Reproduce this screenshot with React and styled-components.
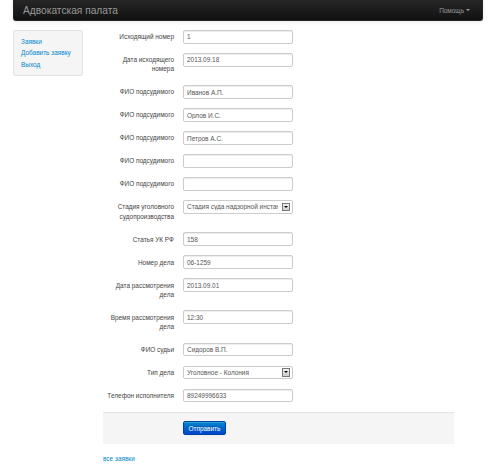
import React from "react";
import styled, { createGlobalStyle } from "styled-components";

const Global = createGlobalStyle`
  html, body { margin: 0; padding: 0; background: #fff; }
  body { font-family: "Liberation Sans", Arial, sans-serif; font-size: 6.44px; color: #333; }
  * { box-sizing: border-box; }
`;

const Page = styled.div`
  width: 500px;
  padding: 0 17px 0 13px;
`;

const Navbar = styled.div`
  height: 21px;
  background: linear-gradient(#262626, #111111);
  border: 1px solid #252525;
  border-top: none;
  border-radius: 0 0 3px 3px;
  box-shadow: 0 1px 4px rgba(0,0,0,0.1);
  display: flex;
  align-items: center;
  justify-content: space-between;
  padding: 0 12px 0 9px;
`;

const Brand = styled.a`
  color: #999;
  font-size: 10.2px;
  text-decoration: none;
  font-weight: 200;
`;

const Help = styled.a`
  color: #999;
  font-size: 6.44px;
  text-decoration: none;
  display: flex;
  align-items: center;
  gap: 2px;
`;

const Caret = styled.span`
  display: inline-block;
  width: 0;
  height: 0;
  border-left: 2px solid transparent;
  border-right: 2px solid transparent;
  border-top: 2px solid #999;
`;

const Content = styled.div`
  display: flex;
  align-items: flex-start;
  margin-top: 9px;
`;

const Sidebar = styled.div`
  width: 70px;
  background: #f5f5f5;
  border: 1px solid #e3e3e3;
  border-radius: 2px;
  padding: 5px 7px;
  display: flex;
  flex-direction: column;
`;

const NavLink = styled.a`
  color: #0088cc;
  text-decoration: none;
  line-height: 11.4px;
  font-size: 6.44px;
`;

const Main = styled.div`
  margin-left: 20px;
  width: 351px;
`;

const Row = styled.div`
  display: flex;
  align-items: flex-start;
  margin-bottom: 9.2px;
`;

const Label = styled.label`
  width: 71px;
  text-align: right;
  padding-top: 2.3px;
  line-height: 9.2px;
  margin-bottom: 2.3px;
  color: #444;
`;

const Controls = styled.div`
  margin-left: 9px;
  width: 110px;
`;

const Input = styled.input`
  display: block;
  width: 110px;
  height: 13.8px;
  border: 1px solid #ccc;
  border-radius: 2px;
  padding: 0 3px;
  font-family: "Liberation Sans", Arial, sans-serif;
  font-size: 6.44px;
  color: #555;
  box-shadow: inset 0 1px 1px rgba(0,0,0,0.075);
  outline: none;
`;

const SelectWrap = styled.div`
  position: relative;
  width: 110px;
  height: 13.8px;
`;

const Select = styled.select`
  appearance: none;
  -webkit-appearance: none;
  display: block;
  width: 110px;
  height: 13.8px;
  border: 1px solid #ccc;
  border-radius: 2px;
  padding: 0 14px 0 3px;
  background: #fff;
  font-family: "Liberation Sans", Arial, sans-serif;
  font-size: 6.44px;
  color: #555;
  outline: none;
`;

const ArrowBox = styled.span`
  position: absolute;
  right: 3px;
  top: 2.5px;
  width: 8.5px;
  height: 8.5px;
  border: 1px solid #777;
  background: linear-gradient(#f0f0f0, #cfcfcf);
  display: flex;
  align-items: center;
  justify-content: center;
  pointer-events: none;
  &::after {
    content: "";
    width: 0;
    height: 0;
    border-left: 2px solid transparent;
    border-right: 2px solid transparent;
    border-top: 2.5px solid #000;
  }
`;

const Actions = styled.div`
  background: #f5f5f5;
  border-top: 1px solid #e5e5e5;
  padding: 8.7px 0 8.7px 80px;
`;

const Button = styled.button`
  height: 13.8px;
  padding: 0 4.5px;
  font-family: "Liberation Sans", Arial, sans-serif;
  font-size: 6.44px;
  color: #fff;
  background: linear-gradient(#0088cc, #0044cc);
  border: 1px solid #0044aa;
  border-radius: 2px;
  text-shadow: 0 -1px 0 rgba(0,0,0,0.25);
  box-shadow: inset 0 1px 0 rgba(255,255,255,0.2), 0 1px 2px rgba(0,0,0,0.05);
`;

const Footer = styled.div`
  margin-top: 9.2px;
  line-height: 9.2px;
`;

const fields = [
  { label: "Исходящий номер", value: "1" },
  { label: "Дата исходящего номера", value: "2013.09.18" },
  { label: "ФИО подсудимого", value: "Иванов А.П." },
  { label: "ФИО подсудимого", value: "Орлов И.С." },
  { label: "ФИО подсудимого", value: "Петров А.С." },
  { label: "ФИО подсудимого", value: "" },
  { label: "ФИО подсудимого", value: "" },
  { label: "Стадия уголовного судопроизводства", select: "Стадия суда надзорной инстанции" },
  { label: "Статья УК РФ", value: "158" },
  { label: "Номер дела", value: "06-1259" },
  { label: "Дата рассмотрения дела", value: "2013.09.01" },
  { label: "Время рассмотрения дела", value: "12:30" },
  { label: "ФИО судьи", value: "Сидоров В.П." },
  { label: "Тип дела", select: "Уголовное - Колония" },
  { label: "Телефон исполнителя", value: "89249996633" },
];

export default function App() {
  return (
    <Page>
      <Global />
      <Navbar>
        <Brand href="#">Адвокатская палата</Brand>
        <Help href="#">Помощь <Caret /></Help>
      </Navbar>
      <Content>
        <Sidebar>
          <NavLink href="#">Заявки</NavLink>
          <NavLink href="#">Добавить заявку</NavLink>
          <NavLink href="#">Выход</NavLink>
        </Sidebar>
        <Main>
          <form onSubmit={(e) => e.preventDefault()}>
            {fields.map((f, i) => (
              <Row key={i}>
                <Label>{f.label}</Label>
                <Controls>
                  {f.select ? (
                    <SelectWrap>
                      <Select defaultValue={f.select}>
                        <option>{f.select}</option>
                      </Select>
                      <ArrowBox />
                    </SelectWrap>
                  ) : (
                    <Input defaultValue={f.value} />
                  )}
                </Controls>
              </Row>
            ))}
            <Actions>
              <Button type="submit">Отправить</Button>
            </Actions>
          </form>
          <Footer>
            <NavLink href="#">все заявки</NavLink>
          </Footer>
        </Main>
      </Content>
    </Page>
  );
}
